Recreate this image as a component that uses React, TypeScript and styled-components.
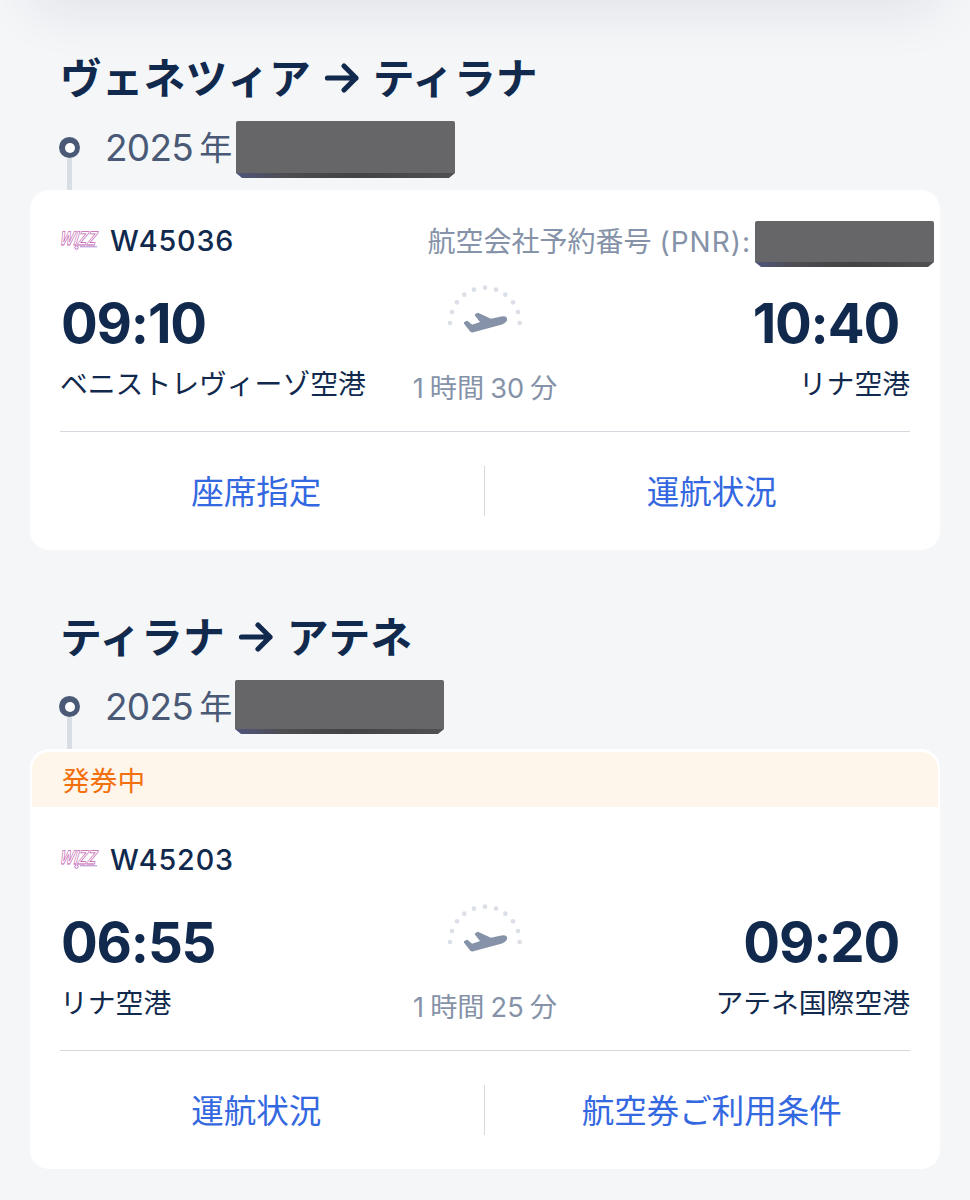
import React from 'react';
import styled, { createGlobalStyle } from 'styled-components';

const GlobalStyle = createGlobalStyle`
  * { box-sizing: border-box; }
  body {
    margin: 0;
    background: #f4f6f8;
    font-family: Inter, 'Noto Sans CJK JP', sans-serif;
    color: #10294d;
  }
`;

const Page = styled.main`
  position: relative;
  width: 970px;
  height: 1200px;
  padding: 48px 30px 0;
  overflow: hidden;
  background: #f4f6f8;
`;

const HeaderShadow = styled.div`
  position: absolute;
  top: -60px;
  left: 34px;
  right: 34px;
  height: 60px;
  box-shadow: 0 4px 60px rgba(30, 30, 60, 0.11);
`;

const Segment = styled.section`
  margin-bottom: 57px;
`;

const Title = styled.h2`
  display: flex;
  align-items: center;
  height: 60px;
  margin: 0;
  padding-left: 30px;
  font-size: 41.8px;
  font-weight: 700;
  line-height: 60px;
  white-space: nowrap;
`;

const TitleText = styled.span`
  padding-top: 1px;
`;

const ArrowIcon = styled.svg`
  width: 36px;
  height: 36px;
  margin: 0 13px;
`;

const DateRow = styled.div`
  display: flex;
  height: 82px;
  padding-left: 29px;
`;

const Marker = styled.div`
  display: flex;
  flex-direction: column;
  align-items: center;
  width: 21px;
  padding-top: 29px;
`;

const Ring = styled.span`
  display: grid;
  place-items: center;
  width: 21px;
  height: 21px;
  border-radius: 50%;
  background: #4a5a76;

  &::before {
    content: '';
    width: 10px;
    height: 10px;
    border-radius: 50%;
    background: #fff;
  }
`;

const Stem = styled.span`
  flex: 1;
  width: 5px;
  background: #d9dee5;
`;

const DateText = styled.span`
  display: flex;
  gap: 6px;
  width: 130px;
  padding-left: 25px;
  font-size: 37px;
  letter-spacing: -0.7px;
  line-height: 80px;
  color: #4a5a76;
  white-space: nowrap;
`;

const Kanji = styled.span`
  font-size: 33px;
`;

const Redacted = styled.span<{ $w: number; $h: number }>`
  flex: none;
  width: ${(p) => p.$w}px;
  height: ${(p) => p.$h}px;
  border-radius: 2px;
  background:
    linear-gradient(90deg, #50557c, #4d4d52 22%, #434345 55%, #505052) bottom / 100% 5px no-repeat,
    #666668;
  clip-path: polygon(0 0, 100% 0, 100% calc(100% - 5px), calc(100% - 6px) 100%, 6px 100%, 0 calc(100% - 5px));
`;

const DateRedacted = styled(Redacted)<{ $left: number }>`
  margin: 13px 0 0 ${(p) => p.$left}px;
`;

const Card = styled.article`
  overflow: hidden;
  border-radius: 19px;
  background: #fff;
`;

const Banner = styled.div`
  height: 55px;
  margin: 3px 2px 2px;
  padding-left: 30px;
  border-radius: 17px 17px 0 0;
  background: #fff6eb;
  color: #f2700d;
  font-size: 27.7px;
  line-height: 58px;
`;

const CardBody = styled.div`
  padding: 30px 30px 0;
`;

const FlightHeader = styled.div`
  display: flex;
  align-items: center;
  height: 40px;
`;

const Logo = styled.svg`
  flex: none;
  width: 42px;
  height: 30px;
  overflow: visible;
`;

const FlightNo = styled.span`
  margin-left: 8px;
  font-size: 28.7px;
  font-weight: 500;
  letter-spacing: 0.9px;
`;

const Pnr = styled.div`
  display: flex;
  align-items: center;
  gap: 4px;
  height: 46px;
  margin: 8px -24px 0 auto;
  color: #8592a8;
  font-size: 28px;
  white-space: nowrap;
`;

const PnrText = styled.span`
  padding-bottom: 9px;
`;

const PnrCode = styled.span`
  letter-spacing: 1px;
`;

const Route = styled.div`
  display: grid;
  grid-template-columns: 1fr 160px 1fr;
  height: 171px;
`;

const Stop = styled.div<{ $end?: boolean }>`
  padding-top: 33px;
  text-align: ${(p) => (p.$end ? 'right' : 'left')};
  white-space: nowrap;
`;

const Time = styled.div<{ $end?: boolean }>`
  padding: ${(p) => (p.$end ? '0 11px 0 0' : '0 0 0 1px')};
  font-size: 54.6px;
  font-weight: 700;
  letter-spacing: -1.2px;
  line-height: 60px;
`;

const Airport = styled.div`
  font-size: 27.8px;
  line-height: 62px;
`;

const Middle = styled.div`
  display: flex;
  flex-direction: column;
  align-items: center;
  padding-top: 15px;
`;

const FlightArc = styled.svg`
  width: 110px;
  height: 70px;
`;

const Duration = styled.div`
  display: flex;
  gap: 6px;
  padding-top: 22px;
  font-size: 27.2px;
  line-height: 44px;
  color: #8592a8;
  white-space: nowrap;
`;

const Actions = styled.div`
  display: flex;
  align-items: center;
  height: 119px;
  margin: 0 30px;
  border-top: 1px solid #d5d9df;
`;

const Action = styled.a`
  flex: 1;
  height: 50px;
  color: #3468e0;
  font-size: 32.5px;
  line-height: 54px;
  text-align: center;
  white-space: nowrap;

  &:first-child {
    margin-left: -31px;
    border-right: 1px solid #d5d9df;
  }
  &:last-child {
    margin-right: -29px;
  }
`;

const dots = [
  [60, 144], [66, 111], [81, 82], [103, 59], [132, 44], [165, 38],
  [198, 44], [226, 59], [249, 82], [264, 111], [269, 144],
];

const Arrow = () => (
  <ArrowIcon viewBox="0 0 36 36" fill="none" stroke="#10294d" strokeWidth="5.2" strokeLinecap="round" strokeLinejoin="round">
    <path d="M3.5 18H32M20 6L32 18L20 30" />
  </ArrowIcon>
);

const WizzLogo = () => (
  <Logo viewBox="0 0 42 30">
    <g transform="translate(3.5 0) skewX(-10)">
      <text
        x="-1"
        y="20.5"
        fontFamily="Inter"
        fontSize="18.5"
        fontWeight="700"
        fontStyle="italic"
        textLength="37"
        lengthAdjust="spacingAndGlyphs"
        fill="#fff"
        stroke="#c45fb0"
        strokeWidth="0.8"
      >
        WIZZ
      </text>
    </g>
    <path d="M20 21.8H37" fill="none" stroke="#a478c8" strokeWidth="0.9" />
    <circle cx="16.5" cy="22.6" r="1.7" fill="#fff" stroke="#b05abf" strokeWidth="0.9" />
  </Logo>
);

const Takeoff = () => (
  <FlightArc viewBox="0 0 330 210">
    {dots.map(([x, y]) => (
      <circle key={x} cx={x} cy={y} r="7" fill="#dbdfe6" />
    ))}
    <path
      d="M105 144L111 141L125 153L156 143L138 120L144 117L183 135L215 128Q227 126 228 132Q228 140 215 145L132 168Q126 170 122 166Z"
      fill="#8592a8"
      stroke="#8592a8"
      strokeWidth="7"
      strokeLinejoin="round"
    />
  </FlightArc>
);

type Leg = {
  from: string;
  to: string;
  dateMask: { w: number; h: number; left: number };
  status?: string;
  flight: string;
  pnr?: boolean;
  depart: string;
  departAirport: string;
  arrive: string;
  arriveAirport: string;
  minutes: string;
  actions: string[];
};

const legs: Leg[] = [
  {
    from: 'ヴェネツィア',
    to: 'ティラナ',
    dateMask: { w: 219, h: 57, left: 26 },
    flight: 'W45036',
    pnr: true,
    depart: '09:10',
    departAirport: 'ベニストレヴィーゾ空港',
    arrive: '10:40',
    arriveAirport: 'リナ空港',
    minutes: '30',
    actions: ['座席指定', '運航状況'],
  },
  {
    from: 'ティラナ',
    to: 'アテネ',
    dateMask: { w: 209, h: 54, left: 25 },
    status: '発券中',
    flight: 'W45203',
    depart: '06:55',
    departAirport: 'リナ空港',
    arrive: '09:20',
    arriveAirport: 'アテネ国際空港',
    minutes: '25',
    actions: ['運航状況', '航空券ご利用条件'],
  },
];

export default function App() {
  return (
    <>
      <GlobalStyle />
      <Page>
        <HeaderShadow />
        {legs.map((leg) => (
          <Segment key={leg.flight}>
            <Title>
              <TitleText>{leg.from}</TitleText>
              <Arrow />
              <TitleText>{leg.to}</TitleText>
            </Title>
            <DateRow>
              <Marker>
                <Ring />
                <Stem />
              </Marker>
              <DateText>
                2025<Kanji>年</Kanji>
              </DateText>
              <DateRedacted $w={leg.dateMask.w} $h={leg.dateMask.h} $left={leg.dateMask.left} />
            </DateRow>
            <Card>
              {leg.status && <Banner>{leg.status}</Banner>}
              <CardBody>
                <FlightHeader>
                  <WizzLogo />
                  <FlightNo>{leg.flight}</FlightNo>
                  {leg.pnr && (
                    <Pnr>
                      <PnrText>
                        航空会社予約番号 <PnrCode>(PNR):</PnrCode>
                      </PnrText>
                      <Redacted $w={179} $h={46} />
                    </Pnr>
                  )}
                </FlightHeader>
                <Route>
                  <Stop>
                    <Time>{leg.depart}</Time>
                    <Airport>{leg.departAirport}</Airport>
                  </Stop>
                  <Middle>
                    <Takeoff />
                    <Duration>
                      <span>1</span>
                      <span>時間</span>
                      <span>{leg.minutes}</span>
                      <span>分</span>
                    </Duration>
                  </Middle>
                  <Stop $end>
                    <Time $end>{leg.arrive}</Time>
                    <Airport>{leg.arriveAirport}</Airport>
                  </Stop>
                </Route>
              </CardBody>
              <Actions>
                {leg.actions.map((label) => (
                  <Action key={label}>{label}</Action>
                ))}
              </Actions>
            </Card>
          </Segment>
        ))}
      </Page>
    </>
  );
}
